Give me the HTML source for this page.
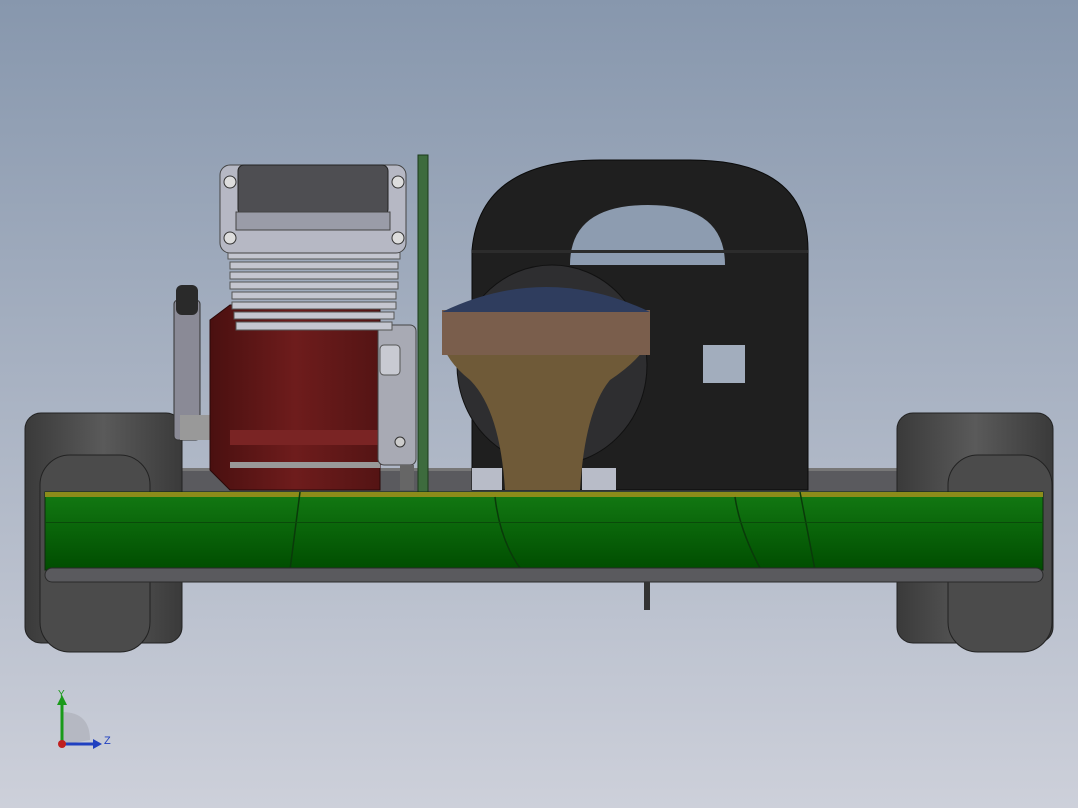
<!DOCTYPE html>
<html><head><meta charset="utf-8"><style>
html,body{margin:0;padding:0;width:1078px;height:808px;overflow:hidden}
svg{display:block}
</style></head><body>
<svg width="1078" height="808" viewBox="0 0 1078 808" xmlns="http://www.w3.org/2000/svg">
<defs>
<linearGradient id="bg" x1="0" y1="0" x2="0" y2="1">
<stop offset="0" stop-color="#8797ad"/><stop offset="1" stop-color="#cdd0da"/>
</linearGradient>
<linearGradient id="tire" x1="0" y1="0" x2="1" y2="0">
<stop offset="0" stop-color="#3a3a3a"/><stop offset="0.5" stop-color="#5a5a5a"/><stop offset="1" stop-color="#3a3a3a"/>
</linearGradient>
<linearGradient id="green" x1="0" y1="0" x2="0" y2="1">
<stop offset="0" stop-color="#137a13"/><stop offset="1" stop-color="#004d00"/>
</linearGradient>
<linearGradient id="red" x1="0" y1="0" x2="1" y2="0">
<stop offset="0" stop-color="#4a1010"/><stop offset="0.5" stop-color="#6e1c1c"/><stop offset="1" stop-color="#541414"/>
</linearGradient>
</defs>
<rect width="1078" height="808" fill="url(#bg)"/>

<rect x="170" y="468" width="735" height="26" fill="#5a5a5e"/>
<rect x="170" y="468" width="735" height="3" fill="#777"/>

<rect x="25" y="413" width="157" height="230" rx="16" fill="url(#tire)" stroke="#222"/>
<rect x="40" y="455" width="110" height="197" rx="30" fill="#4b4b4b" stroke="#222"/>
<rect x="897" y="413" width="156" height="230" rx="16" fill="url(#tire)" stroke="#222"/>
<rect x="948" y="455" width="104" height="197" rx="30" fill="#4b4b4b" stroke="#222"/>

<path d="M472 490 L472 250 Q480 160 600 160 L690 160 Q808 160 808 250 L808 490 Z" fill="#1f1f1f" stroke="#0a0a0a"/>
<path d="M570 265 Q570 205 648 205 Q725 205 725 265 Z" fill="#8d9cb0"/>
<rect x="472" y="250" width="336" height="3" fill="#2c2c2c"/>
<rect x="703" y="345" width="42" height="38" fill="#a2adbd"/>

<ellipse cx="552" cy="365" rx="95" ry="100" fill="#2e2e30" stroke="#111"/>
<path d="M442 340 L650 340 Q640 360 610 380 Q585 410 580 490 L505 490 Q500 410 470 380 Q445 360 442 340 Z" fill="#6f5a38"/>
<rect x="442" y="310" width="208" height="45" fill="#7a5e4c"/>
<path d="M442 312 Q546 262 650 312 Z" fill="#2f3d5e"/>
<rect x="472" y="468" width="30" height="22" fill="#b8bcc8"/>
<rect x="582" y="468" width="34" height="22" fill="#b8bcc8"/>

<rect x="418" y="155" width="10" height="337" fill="#3d6b3d" stroke="#1a3a1a"/>

<rect x="174" y="300" width="26" height="140" rx="4" fill="#8a8a96" stroke="#333"/>
<rect x="176" y="285" width="22" height="30" rx="6" fill="#2a2a2a"/>
<rect x="180" y="415" width="30" height="25" fill="#999"/>

<path d="M210 320 L230 305 L380 305 L380 490 L230 490 L210 470 Z" fill="url(#red)" stroke="#2a0808"/>
<rect x="230" y="430" width="150" height="15" fill="#7a2424"/>
<rect x="230" y="462" width="150" height="6" fill="#999"/>
<rect x="378" y="325" width="38" height="140" rx="6" fill="#a8aab4" stroke="#444"/>
<rect x="380" y="345" width="20" height="30" rx="4" fill="#c8cad2" stroke="#555"/>
<circle cx="400" cy="442" r="5" fill="#ccc" stroke="#333"/>

<g fill="#c4c6d0" stroke="#555" stroke-width="1">
<rect x="228" y="252" width="172" height="7"/>
<rect x="230" y="262" width="168" height="7"/>
<rect x="230" y="272" width="168" height="7"/>
<rect x="230" y="282" width="168" height="7"/>
<rect x="232" y="292" width="164" height="7"/>
<rect x="232" y="302" width="164" height="7"/>
<rect x="234" y="312" width="160" height="7"/>
<rect x="236" y="322" width="156" height="8"/>
</g>

<rect x="220" y="165" width="186" height="88" rx="10" fill="#b6b8c4" stroke="#444"/>
<rect x="238" y="165" width="150" height="50" rx="6" fill="#4e4e52" stroke="#222"/>
<rect x="236" y="212" width="154" height="18" fill="#9a9ca8" stroke="#444"/>
<circle cx="230" cy="182" r="6" fill="#ddd" stroke="#333"/>
<circle cx="398" cy="182" r="6" fill="#ddd" stroke="#333"/>
<circle cx="230" cy="238" r="6" fill="#ddd" stroke="#333"/>
<circle cx="398" cy="238" r="6" fill="#ddd" stroke="#333"/>

<rect x="400" y="465" width="14" height="25" fill="#666"/>

<rect x="45" y="492" width="998" height="78" fill="url(#green)" stroke="#0c2a0c"/>
<rect x="45" y="492" width="998" height="5" fill="#8c8c1a"/>
<path d="M300 492 L290 570 M495 497 Q500 540 520 568 M735 497 Q740 530 760 568 M800 492 L815 570" stroke="#0a3a0a" stroke-width="1.5" fill="none"/>
<rect x="45" y="522" width="998" height="1" fill="#0a4a0a"/>
<rect x="45" y="568" width="998" height="14" rx="7" fill="#5a5a5e" stroke="#2a2a2a"/>
<rect x="644" y="582" width="6" height="28" fill="#333"/>

<path d="M62 745 L62 712 Q90 712 90 740 Z" fill="#b5b8c2"/>
<line x1="62" y1="745" x2="62" y2="700" stroke="#1a9a1a" stroke-width="3"/>
<path d="M57 705 L62 695 L67 705 Z" fill="#1a9a1a"/>
<line x1="62" y1="744" x2="95" y2="744" stroke="#2040c0" stroke-width="3"/>
<path d="M93 739 L102 744 L93 749 Z" fill="#2040c0"/>
<circle cx="62" cy="744" r="4" fill="#c02020"/>
<text x="58" y="697" font-family="Liberation Sans, sans-serif" font-size="10" fill="#1a9a1a">Y</text>
<text x="104" y="744" font-family="Liberation Sans, sans-serif" font-size="11" fill="#2040c0">Z</text>
</svg>
</body></html>
